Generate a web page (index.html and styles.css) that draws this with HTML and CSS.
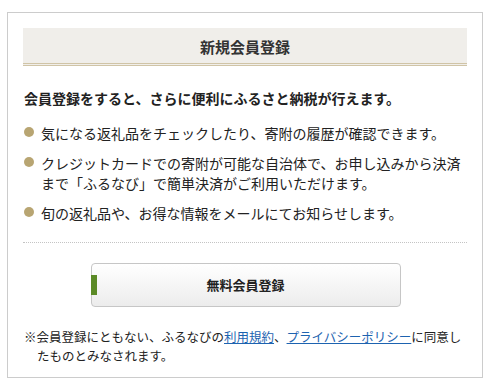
FILE: index.html
```html
<!DOCTYPE html>
<html lang="ja">
<head>
<meta charset="utf-8">
<link rel="stylesheet" href="styles.css">
</head>
<body>
<div class="page">
  <div class="box">
    <h2 class="title">新規会員登録</h2>
    <p class="lead">会員登録をすると、さらに便利にふるさと納税が行えます。</p>
    <ul class="merits">
      <li>気になる返礼品をチェックしたり、寄附の履歴が確認できます。</li>
      <li>クレジットカードでの寄附が可能な自治体で、お申し込みから決済まで「ふるなび」で簡単決済がご利用いただけます。</li>
      <li>旬の返礼品や、お得な情報をメールにてお知らせします。</li>
    </ul>
    <div class="action">
      <a class="btn" href="#">無料会員登録</a>
    </div>
    <p class="note">※会員登録にともない、ふるなびの<a href="#">利用規約</a>、<a href="#">プライバシーポリシー</a>に同意したものとみなされます。</p>
  </div>
</div>
</body>
</html>
```
FILE: styles.css
```css
html, body {
  margin: 0;
  padding: 0;
  background: #fff;
}
body {
  font-family: "Noto Sans CJK JP", "Noto Sans", sans-serif;
  color: #333;
}
.page {
  padding: 12px 10px 10px 7px;
}
.box {
  width: 476px;
  box-sizing: border-box;
  border: 1px solid #cccccc;
  padding: 15px 15px 12px 15px;
}
.title {
  margin: 0;
  height: 38px;
  box-sizing: border-box;
  padding-top: 9px;
  background: #f0eeea;
  border-bottom: 3px double #d0c4a6;
  font-size: 15px;
  line-height: 20px;
  font-weight: bold;
  text-align: center;
  color: #333;
}
.lead {
  margin: 22px 0 0 1px;
  font-size: 14px;
  line-height: 20px;
  font-weight: bold;
  color: #222;
}
.merits {
  list-style: none;
  margin: 15px 0 0 0;
  padding: 0 0 19px 0;
  border-bottom: 1px dotted #c4c4c4;
}
.merits li {
  position: relative;
  padding-left: 18px;
  font-size: 14px;
  line-height: 20px;
  color: #222;
  margin-bottom: 10px;
}
.merits li:last-child {
  margin-bottom: 0;
}
.merits li::before {
  content: "";
  position: absolute;
  left: 1px;
  top: 4px;
  width: 10px;
  height: 10px;
  border-radius: 50%;
  background: #b8a572;
}
.action {
  display: flex;
  justify-content: center;
  padding-top: 20px;
  padding-left: 1px;
}
.btn {
  position: relative;
  display: block;
  width: 310px;
  height: 44px;
  box-sizing: border-box;
  border: 1px solid #c6c6c6;
  border-radius: 4px;
  background: linear-gradient(#ffffff, #ececec);
  text-align: center;
  line-height: 42px;
  font-size: 13px;
  font-weight: bold;
  color: #222;
  text-decoration: none;
}
.btn::before {
  content: "";
  position: absolute;
  left: -1px;
  top: 11px;
  width: 6px;
  height: 20px;
  background: #5b8a26;
}
.note {
  margin: 20px 0 0 1px;
  padding-left: 13px;
  text-indent: -13px;
  font-size: 12.5px;
  line-height: 19px;
  color: #222;
}
.note a {
  color: #1d63b0;
  text-decoration: underline;
}
```
